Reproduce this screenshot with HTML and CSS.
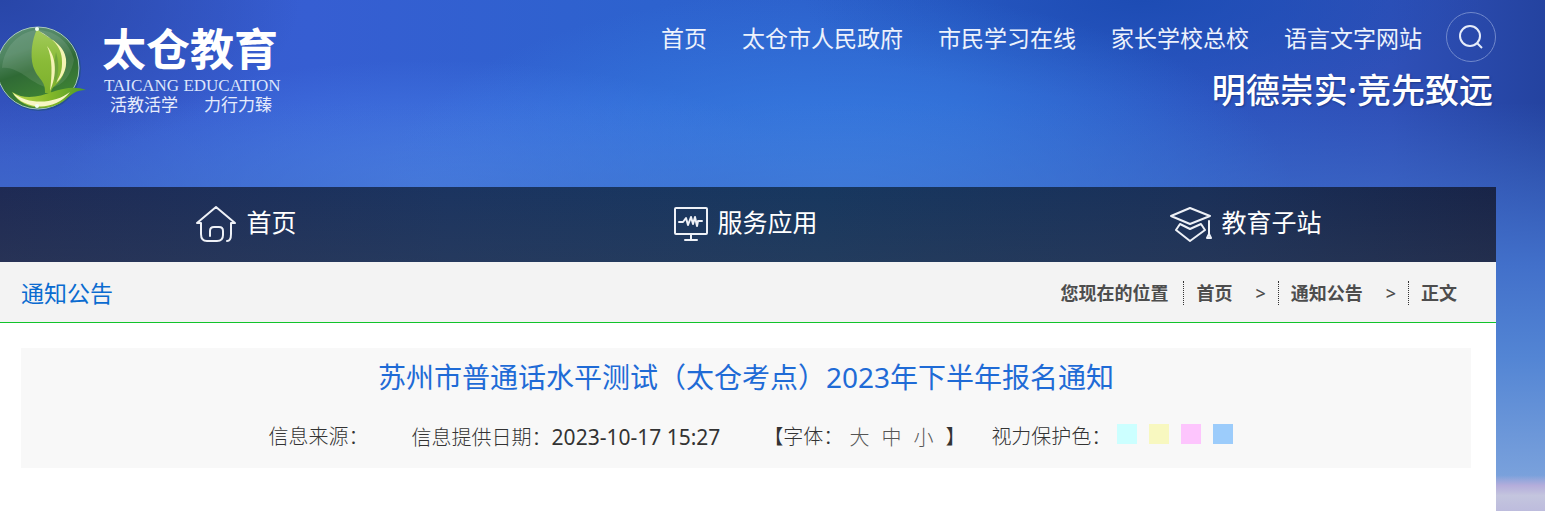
FILE: index.html
```html
<!DOCTYPE html>
<html lang="zh-CN">
<head>
<meta charset="utf-8">
<title>苏州市普通话水平测试（太仓考点）2023年下半年报名通知</title>
<link rel="stylesheet" href="styles.css">
</head>
<body>
<div class="page">
  <header class="header">
    <a class="brand" href="#">
      <svg class="brand-mark" viewBox="0 0 88 86" aria-hidden="true">
        <defs>
          <linearGradient id="globe" x1="0" y1="0" x2="0.35" y2="1">
            <stop offset="0" stop-color="#5c8f76"/>
            <stop offset="0.35" stop-color="#4f8560"/>
            <stop offset="0.6" stop-color="#2f6a35"/>
            <stop offset="1" stop-color="#3f8434"/>
          </linearGradient>
          <linearGradient id="leaf" x1="0" y1="0" x2="0" y2="1">
            <stop offset="0" stop-color="#a3cb5c"/>
            <stop offset="0.5" stop-color="#8abb38"/>
            <stop offset="1" stop-color="#7db02c"/>
          </linearGradient>
          <linearGradient id="swoosh" x1="0" y1="0" x2="1" y2="0">
            <stop offset="0" stop-color="#b9d84a"/>
            <stop offset="0.5" stop-color="#86b92a"/>
            <stop offset="1" stop-color="#4c9a2a"/>
          </linearGradient>
        </defs>
        <circle cx="39" cy="43" r="42" fill="#1f4f78" opacity="0.6"/>
        <circle cx="38" cy="42" r="41" fill="url(#globe)" stroke="#a9c8bd" stroke-width="1"/>
        <path d="M2 42C4 20 20 5 38 4C58 5 70 18 74 34C70 54 60 60 50 62C32 60 20 40 2 42Z" fill="#ffffff" opacity="0.1"/>
        <path d="M37 3C32 14 30 28 33 40C37 53 46 54 45 67L51 67C51 62 55 60 58 57C66 48 68 36 63 25C58 14 46 12 37 3Z" fill="url(#leaf)"/>
        <path d="M39 5C54 13 63 22 62 38C62 47 58 53 56 57C63 51 67 43 66 33C64 18 50 13 39 5Z" fill="#f4f3b4"/>
        <path d="M56 26C60 40 58 48 56 57C52 50 54 38 56 26Z" fill="#6fa53a"/>
        <path d="M47 20C53 33 52 49 50 65C57 49 57 32 47 20Z" fill="#f4f3b4"/>
        <path d="M12 66C26 75 40 70 52 66C64 62 76 60 86 64C76 64 72 68 65 74C49 87 21 83 12 66Z" fill="url(#swoosh)"/>
        <path d="M13 67C23 83 54 87 70 66C56 77 30 80 13 67Z" fill="#f8f7c4"/>
        <circle cx="37" cy="3" r="2" fill="#f2fff2"/>
        <circle cx="37" cy="80" r="2" fill="#f2fff2"/>
      </svg>
      <span class="brand-text">
        <span class="brand-name">太仓教育</span>
        <span class="brand-latin">TAICANG EDUCATION</span>
        <span class="brand-motto"><span>活教活学</span><span>力行力臻</span></span>
      </span>
    </a>
    <div class="header-side">
      <div class="tools">
        <nav class="top-links">
          <a href="#">首页</a>
          <a href="#">太仓市人民政府</a>
          <a href="#">市民学习在线</a>
          <a href="#">家长学校总校</a>
          <a href="#">语言文字网站</a>
        </nav>
        <button class="search" type="button" aria-label="搜索">
          <svg viewBox="0 0 24 24" aria-hidden="true">
            <circle cx="11" cy="11" r="10"/>
            <path d="M18 18L23 23"/>
          </svg>
        </button>
      </div>
      <p class="slogan">明德崇实·竞先致远</p>
    </div>
  </header>

  <nav class="main-nav">
    <a href="#">
      <svg class="icon-home" viewBox="0 0 42 38" aria-hidden="true">
        <path d="M6 18H2L21 2L40 18H36V29Q36 36 32 36M6 18V29Q6 36 12 36H22Q28 36 28 30V26Q28 22 24 22H19Q15 22 15 26V31"/>
      </svg>
      <span>首页</span>
    </a>
    <a href="#">
      <svg class="icon-monitor" viewBox="0 0 34 38" aria-hidden="true">
        <rect x="1" y="3" width="32" height="26" rx="1"/>
        <path d="M17 29V35M11 35H23M5 17H9L12 13L14 20L17 12L19 19L21 12L23 21L24 16H28"/>
      </svg>
      <span>服务应用</span>
    </a>
    <a href="#">
      <svg class="icon-cap" viewBox="0 0 42 38" aria-hidden="true">
        <path d="M1 11L20 3L40 11L20 19ZM10 19L20 24L31 19L35 25L20 36L6 25Z"/>
        <path d="M39 16V30M37 33L39 29L41 33Z"/>
      </svg>
      <span>教育子站</span>
    </a>
  </nav>

  <main class="content">
    <div class="location-bar">
      <h2>通知公告</h2>
      <nav class="crumbs">
        <span class="crumbs-label">您现在的位置</span>
        <a href="#">首页</a>
        <span class="arrow">&gt;</span>
        <a href="#">通知公告</a>
        <span class="arrow">&gt;</span>
        <a href="#">正文</a>
      </nav>
    </div>

    <article class="notice">
      <h1>苏州市普通话水平测试（太仓考点）2023年下半年报名通知</h1>
      <div class="meta">
        <span>信息来源：</span>
        <span>信息提供日期：<time datetime="2023-10-17T15:27">2023-10-17 15:27</time></span>
        <div class="font-size">
          <span>【字体：</span>
          <button type="button">大</button>
          <button type="button">中</button>
          <button type="button">小</button>
          <span>】</span>
        </div>
        <div class="eye-care">
          <span>视力保护色：</span>
          <button class="swatch cyan" type="button" aria-label="青色"></button>
          <button class="swatch yellow" type="button" aria-label="黄色"></button>
          <button class="swatch pink" type="button" aria-label="粉色"></button>
          <button class="swatch blue" type="button" aria-label="蓝色"></button>
        </div>
      </div>
    </article>
  </main>
</div>
</body>
</html>
```

FILE: styles.css
```css
* {
  box-sizing: border-box;
}

body {
  margin: 0;
  color: #333;
  font-family: "Noto Sans", "Noto Sans CJK SC", sans-serif;
  font-size: 20px;
  line-height: 30px;
  background:
    linear-gradient(180deg, transparent 93%, #b4addb 95%, #c4c5de 97%, #bdbcdd 100%),
    linear-gradient(180deg, transparent 20%, #4270ca 52%, #5385d4 70%, #7ba2dc 94%),
    radial-gradient(ellipse 460px 210px at 54% 200px, #3b84e8 0%, transparent 100%),
    radial-gradient(ellipse 380px 130px at 28% 190px, #4a80ea 0%, transparent 100%),
    radial-gradient(ellipse 300px 160px at 0 0, #2846a8 0%, transparent 100%),
    radial-gradient(ellipse 340px 100px at 74% 0, #1d4cb4 0%, transparent 100%),
    linear-gradient(90deg, #3858c8 0%, #365ed2 20%, #2d62ce 42%, #2b60ca 62%, #2c55c0 78%, #2f50b8 90%, #2443a0 100%);
}

a {
  color: inherit;
  text-decoration: none;
}

button {
  padding: 0;
  border: 0;
  background: none;
  color: inherit;
  font: inherit;
  cursor: pointer;
}

h1,
h2,
p {
  margin: 0;
  font-weight: 400;
}

.page {
  display: flex;
  flex-direction: column;
  min-height: 100vh;
  margin-right: 49px;
}

.header {
  display: flex;
  justify-content: space-between;
  align-items: flex-start;
  min-height: 187px;
  padding-top: 12px;
  color: #fff;
}

.brand {
  display: flex;
  gap: 14px;
  padding-top: 14px;
}

.brand-mark {
  width: 88px;
  height: 86px;
}

.brand-text {
  display: flex;
  flex-direction: column;
}

.brand-name {
  font-size: 44px;
  font-weight: 700;
  line-height: 46px;
}

.brand-latin {
  padding-top: 4px;
  padding-left: 2px;
  font-family: "Liberation Serif", serif;
  font-size: 17px;
  line-height: 20px;
  color: #dde6fb;
}

.brand-motto {
  display: flex;
  gap: 26px;
  padding-left: 8px;
  font-size: 17px;
  line-height: 18px;
  color: #e6ecfc;
}

.header-side {
  display: flex;
  flex-direction: column;
  align-items: flex-end;
}

.tools {
  display: flex;
  align-items: center;
  gap: 24px;
}

.top-links {
  display: flex;
  gap: 35px;
  padding-top: 2px;
  font-size: 23px;
  color: #edf2fc;
}

.search {
  display: grid;
  place-items: center;
  width: 50px;
  height: 50px;
  border: 1px solid #7088cc;
  border-radius: 50%;
}

.search svg {
  width: 24px;
  height: 24px;
  fill: none;
  stroke: #e6ecfa;
  stroke-width: 2;
}

.slogan {
  padding-top: 8px;
  padding-right: 3px;
  font-size: 34px;
  font-weight: 500;
  line-height: 40px;
  text-shadow: 1px 1px 2px #1c3a8c;
}

.main-nav {
  display: grid;
  grid-template-columns: repeat(3, 1fr);
  gap: 8px;
  min-height: 75px;
  padding-right: 4px;
  padding-bottom: 2px;
  color: #fff;
  font-size: 25px;
  background:
    linear-gradient(180deg, rgba(60, 70, 90, 0) 0%, rgba(60, 70, 90, 0.3) 100%),
    linear-gradient(90deg, #1e2a54 0%, #1b3460 30%, #17375f 55%, #1a3059 80%, #182448 100%);
}

.main-nav a {
  display: flex;
  justify-content: center;
  align-items: center;
  gap: 9px;
}

.main-nav span {
  padding-bottom: 4px;
}

.main-nav svg {
  height: 38px;
  fill: none;
  stroke: #eef1f7;
  stroke-width: 2;
  stroke-linejoin: round;
  stroke-linecap: round;
}

.icon-home,
.icon-cap {
  width: 42px;
}

.icon-monitor {
  width: 34px;
}

.content {
  flex: 1;
  background: #fff;
}

.location-bar {
  display: flex;
  justify-content: space-between;
  align-items: center;
  min-height: 61px;
  padding: 0 39px 0 21px;
  border-bottom: 1px solid #11c32b;
  background: #f3f3f3;
}

.location-bar h2 {
  padding-top: 2px;
  font-size: 23px;
  color: #0a6bd0;
}

.crumbs {
  display: flex;
  align-items: center;
  padding-top: 2px;
  color: #4d4d4d;
  font-size: 18px;
  font-weight: 700;
  line-height: 24px;
}

.crumbs-label {
  padding-right: 15px;
}

.crumbs a {
  padding-left: 12px;
  border-left: 1px dotted #333;
}

.arrow {
  padding: 0 12px 0 23px;
  font-weight: 500;
}

.notice {
  margin: 25px 25px 0 21px;
  padding: 10px 0 15px;
  background: #f8f8f8;
}

.notice h1 {
  font-size: 28px;
  line-height: 38px;
  text-align: center;
  color: #1f6bd6;
}

.meta {
  display: flex;
  flex-wrap: wrap;
  justify-content: center;
  gap: 0 43px;
  padding-top: 26px;
  padding-left: 10px;
  font-weight: 300;
}

.meta time {
  font-size: 21px;
  font-weight: 400;
}

.font-size {
  display: flex;
  gap: 12px;
}

.font-size button {
  color: #555;
}

.font-size span:first-child {
  margin-right: -6px;
}

.eye-care {
  display: flex;
  gap: 12px;
  margin-left: -17px;
}

.eye-care span {
  margin-right: -6px;
}

.swatch {
  width: 20px;
  height: 20px;
  margin-top: 2px;
}

.cyan {
  background: #ccffff;
}

.yellow {
  background: #f8f8c0;
}

.pink {
  background: #fdc5fd;
}

.blue {
  background: #9cccfb;
}
```
